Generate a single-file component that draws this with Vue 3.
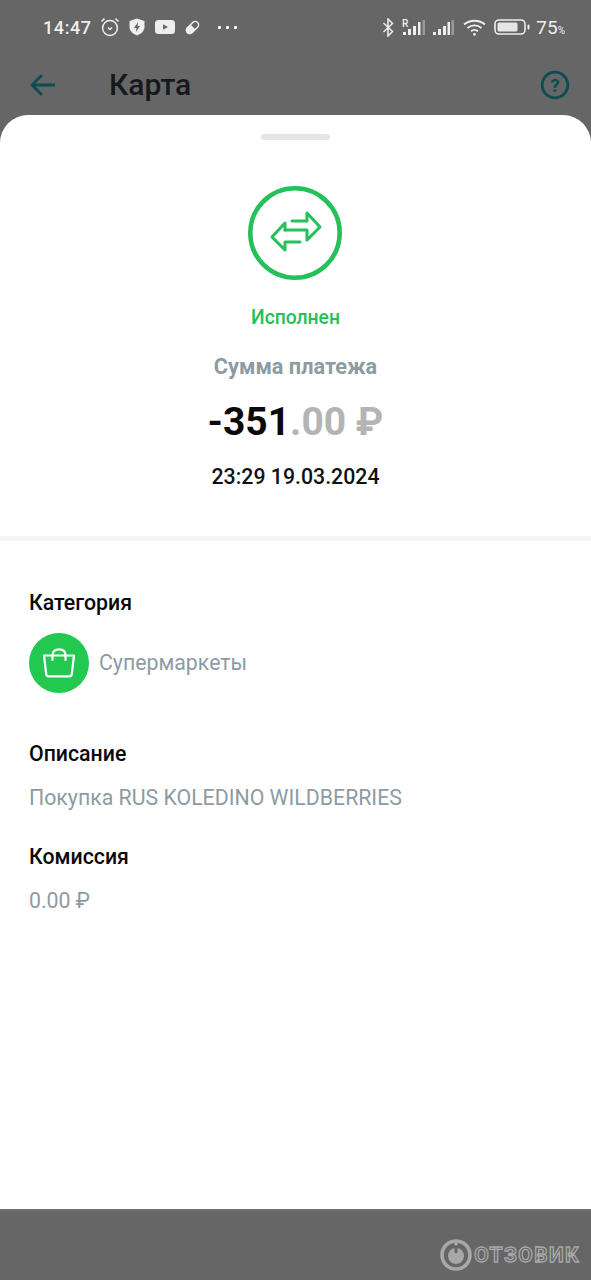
<template>
  <div class="page">
    <div class="status-bar">
      <div class="status-left">
        <span class="clock">14:47</span>
        <svg class="ic" width="20" height="20" viewBox="0 0 20 20" fill="none" stroke="#eee" stroke-width="1.5">
          <circle cx="10" cy="11" r="7.4" />
          <path d="M8 10.5l2 2 2-2" />
          <path d="M1.5 4.5L4.5 1.5M18.5 4.5L15.5 1.5" />
        </svg>
        <svg class="ic shield" width="16" height="18" viewBox="0 0 16 18">
          <path d="M8 0.5L15.5 3V9C15.5 13 12 16 8 17.5 4 16 .5 13 .5 9V3z" fill="#eee" />
          <path d="M9 4L5 10H7.5L7 14 11 8H8.5z" fill="#666" />
        </svg>
        <svg class="ic yt" width="20" height="14" viewBox="0 0 20 14">
          <rect width="20" height="14" rx="3.5" fill="#eee" />
          <path d="M8 4.3L13 7 8 9.7z" fill="#666" />
        </svg>
        <svg class="ic pill" width="17" height="17" viewBox="0 0 17 17" fill="none" stroke="#eee" stroke-width="1.5">
          <rect x="-7.2" y="-3.4" width="14.4" height="6.8" rx="3.4" transform="translate(8.5 8.5) rotate(-45)" />
          <path d="M6 6l5 5" />
          <path d="M6 6L2.8 9.2C1.5 10.5 1.5 12.5 2.8 14 4.3 15.5 6.5 15.5 7.8 14L11 11z" fill="#eee" stroke="none" />
        </svg>
        <span class="dots"><i></i><i></i><i></i></span>
      </div>
      <div class="status-right">
        <svg class="ic" width="13" height="19" viewBox="0 0 13 19" fill="none" stroke="#eee" stroke-width="1.5">
          <path d="M1.5 5L10.5 13.5 6 18V1L10.5 5.5 1.5 14" />
        </svg>
        <svg class="ic" width="23" height="17" viewBox="0 0 23 17">
          <text x="0" y="8" class="roam">R</text>
          <rect x="1" y="13" width="3" height="3" fill="#eee" />
          <rect x="6" y="10" width="3" height="6" fill="#eee" />
          <rect x="11" y="7" width="3" height="9" fill="#eee" />
          <rect x="16" y="3" width="2.5" height="13" fill="#eee" />
          <rect x="20.5" y="1" width="2.5" height="15" fill="#999" />
        </svg>
        <svg class="ic" width="22" height="17" viewBox="0 0 22 17">
          <rect x="1" y="13" width="3" height="3" fill="#eee" />
          <rect x="6" y="10" width="3" height="6" fill="#eee" />
          <rect x="11" y="7" width="3" height="9" fill="#eee" />
          <rect x="15.5" y="3" width="2.5" height="13" fill="#eee" />
          <rect x="19.5" y="1" width="2.5" height="15" fill="#999" />
        </svg>
        <svg class="ic wifi" width="23" height="17" viewBox="0 0 23 17" fill="none" stroke="#eee" stroke-width="1.8">
          <path d="M1 5.5C7 .5 16 .5 22 5.5" />
          <path d="M4.5 9C8.5 5.5 14.5 5.5 18.5 9" />
          <path d="M8 12.3C10 10.7 13 10.7 15 12.3" />
          <circle cx="11.5" cy="15.3" r="1.4" fill="#eee" stroke="none" />
        </svg>
        <svg class="ic batt" width="36" height="16" viewBox="0 0 36 16">
          <rect x="1" y="1" width="30" height="14" rx="4" fill="none" stroke="#eee" stroke-width="1.6" />
          <rect x="3.5" y="3.5" width="20" height="9" rx="1.5" fill="#e6e6e6" />
          <rect x="33.5" y="5.5" width="2" height="5" rx="1" fill="#eee" />
        </svg>
        <span class="battery">75<small>%</small></span>
      </div>
    </div>

    <div class="top-bar">
      <svg width="26" height="24" viewBox="0 0 26 24" fill="none" stroke="#0b4d50" stroke-width="2.8">
        <path d="M25 12H2.5M12 2L2 12l10 10" />
      </svg>
      <span class="title">Карта</span>
      <svg class="help" width="30" height="30" viewBox="0 0 30 30" fill="none">
        <circle cx="15" cy="15" r="12.8" stroke="#0b4d50" stroke-width="2.8" />
        <text x="15" y="21.5" text-anchor="middle" class="help-mark">?</text>
      </svg>
    </div>

    <div class="sheet">
      <div class="handle"></div>

      <div class="summary">
        <svg class="status-icon" width="94" height="94" viewBox="0 0 94 94" fill="none" stroke="#25c05a">
          <circle cx="47" cy="47" r="44.7" stroke-width="4.6" />
          <g stroke-width="3" stroke-linejoin="round" stroke-linecap="round">
            <path d="M44 35H59V27L72 41 59 54V44H37" />
            <path d="M52 56H37V64L24 51 37 37V44" />
          </g>
        </svg>
        <div class="state">Исполнен</div>
        <div class="sum-label">Сумма платежа</div>
        <div class="amount">-351<span class="cents">.00 ₽</span></div>
        <div class="date">23:29 19.03.2024</div>
      </div>

      <div class="divider"></div>

      <div class="details">
        <div class="label cat-label">Категория</div>
        <div class="category">
          <div class="cat-icon">
            <svg width="34" height="30" viewBox="0 0 34 30" fill="none" stroke="#fff" stroke-width="2.2" stroke-linejoin="round" stroke-linecap="round">
              <path d="M2 7.5H32L29.8 26C29.6 27.5 28.8 28.3 27.5 28.3H6.5C5.2 28.3 4.4 27.5 4.2 26z" />
              <path d="M10.5 12V7C10.5 3.5 13 1.3 17 1.3S23.5 3.5 23.5 7V12" />
            </svg>
          </div>
          <span class="value">Супермаркеты</span>
        </div>

        <div class="label desc-label">Описание</div>
        <div class="value row-value">Покупка RUS KOLEDINO WILDBERRIES</div>

        <div class="label fee-label">Комиссия</div>
        <div class="value row-value">0.00 ₽</div>
      </div>
    </div>

    <div class="bottom">
      <svg class="otz-logo" width="32" height="32" viewBox="0 0 32 32" fill="none">
        <circle cx="16" cy="16" r="14" stroke="#a8a8a8" stroke-width="3.6" />
        <circle cx="16" cy="17" r="8" fill="#a8a8a8" />
        <rect x="14.5" y="3" width="3" height="11" fill="#666" />
        <circle cx="16" cy="4.5" r="2" fill="#a8a8a8" />
      </svg>
      <span class="otz-text">ОТЗОВИК</span>
    </div>
  </div>
</template>

<script setup>
</script>

<style>
html, body {
  margin: 0;
  background: #666;
}
</style>

<style scoped>
.page {
  width: 591px;
  height: 1280px;
  background: #666;
  display: flex;
  flex-direction: column;
  overflow: hidden;
  font-family: Roboto, "Noto Sans", sans-serif;
}

.status-bar {
  height: 54px;
  box-sizing: border-box;
  padding: 0 26px 0 43px;
  display: flex;
  justify-content: space-between;
  align-items: center;
  color: #eee;
}

.status-left,
.status-right {
  display: flex;
  align-items: center;
}

.ic {
  display: block;
}

.clock {
  font-size: 18px;
  font-weight: 500;
  letter-spacing: 0.6px;
  margin-right: 8px;
}

.shield {
  margin-left: 9px;
}

.yt {
  margin-left: 10px;
}

.pill {
  margin-left: 9px;
}

.dots {
  display: flex;
  gap: 5px;
  margin-left: 17px;
}

.dots i {
  width: 3px;
  height: 3px;
  background: #eee;
  display: block;
}

.status-right {
  gap: 7px;
}

.wifi {
  margin-left: 2px;
}

.batt {
  margin-left: 1px;
}

.roam {
  font-size: 10px;
  font-weight: 500;
  fill: #eee;
}

.battery {
  font-size: 19px;
  margin-left: -1px;
}

.battery small {
  font-size: 10px;
}

.top-bar {
  height: 61px;
  box-sizing: border-box;
  padding: 0 21px 0 30px;
  display: flex;
  align-items: center;
}

.title {
  margin-left: 53px;
  font-size: 30px;
  font-weight: 500;
  color: #16191c;
}

.help {
  margin-left: auto;
}

.help-mark {
  font-size: 19px;
  font-weight: 700;
  fill: #0b4d50;
}

.sheet {
  height: 1094px;
  background: #fff;
  border-radius: 28px 28px 0 0;
  display: flex;
  flex-direction: column;
}

.handle {
  width: 69px;
  height: 6px;
  margin: 19px auto 0;
  border-radius: 3px;
  background: #e4e4e4;
}

.summary {
  display: flex;
  flex-direction: column;
  align-items: center;
  padding-top: 46px;
}

.status-icon {
  display: block;
  margin-right: 1px;
}

.state {
  margin-top: 26px;
  font-size: 19.3px;
  line-height: 24px;
  font-weight: 500;
  color: #25c05a;
}

.sum-label {
  margin-top: 24px;
  font-size: 21.7px;
  line-height: 26px;
  font-weight: 700;
  color: #8e9ba3;
}

.amount {
  margin-top: 18px;
  font-size: 39px;
  line-height: 48px;
  font-weight: 700;
  color: #0a0a0a;
}

.cents {
  color: #b4b4b4;
}

.date {
  margin-top: 18px;
  font-size: 21.3px;
  line-height: 26px;
  font-weight: 500;
  color: #111;
}

.divider {
  height: 5px;
  margin-top: 46px;
  background: #f3f5f5;
}

.details {
  padding: 49px 29px 0;
}

.label {
  font-size: 21.3px;
  line-height: 26px;
  font-weight: 500;
  color: #0a0a0a;
}

.category {
  display: flex;
  align-items: center;
  gap: 10px;
  margin-top: 17px;
}

.cat-icon {
  width: 60px;
  height: 60px;
  border-radius: 50%;
  background: #22c84f;
  display: flex;
  align-items: center;
  justify-content: center;
}

.value {
  font-size: 21.3px;
  line-height: 26px;
  color: #8e9ba3;
}

.row-value {
  margin-top: 18px;
}

.desc-label {
  margin-top: 48px;
}

.fee-label {
  margin-top: 33px;
}

.bottom {
  flex: 1;
  border-top: 2px solid #707070;
  box-sizing: border-box;
  display: flex;
  align-items: center;
  justify-content: flex-end;
  gap: 2px;
  padding: 18px 11px 0 0;
}

.otz-logo {
  display: block;
}

.otz-text {
  font-size: 21px;
  font-weight: 700;
  letter-spacing: 1.4px;
  color: #666;
  -webkit-text-stroke: 1.3px #a8a8a8;
}
</style>
